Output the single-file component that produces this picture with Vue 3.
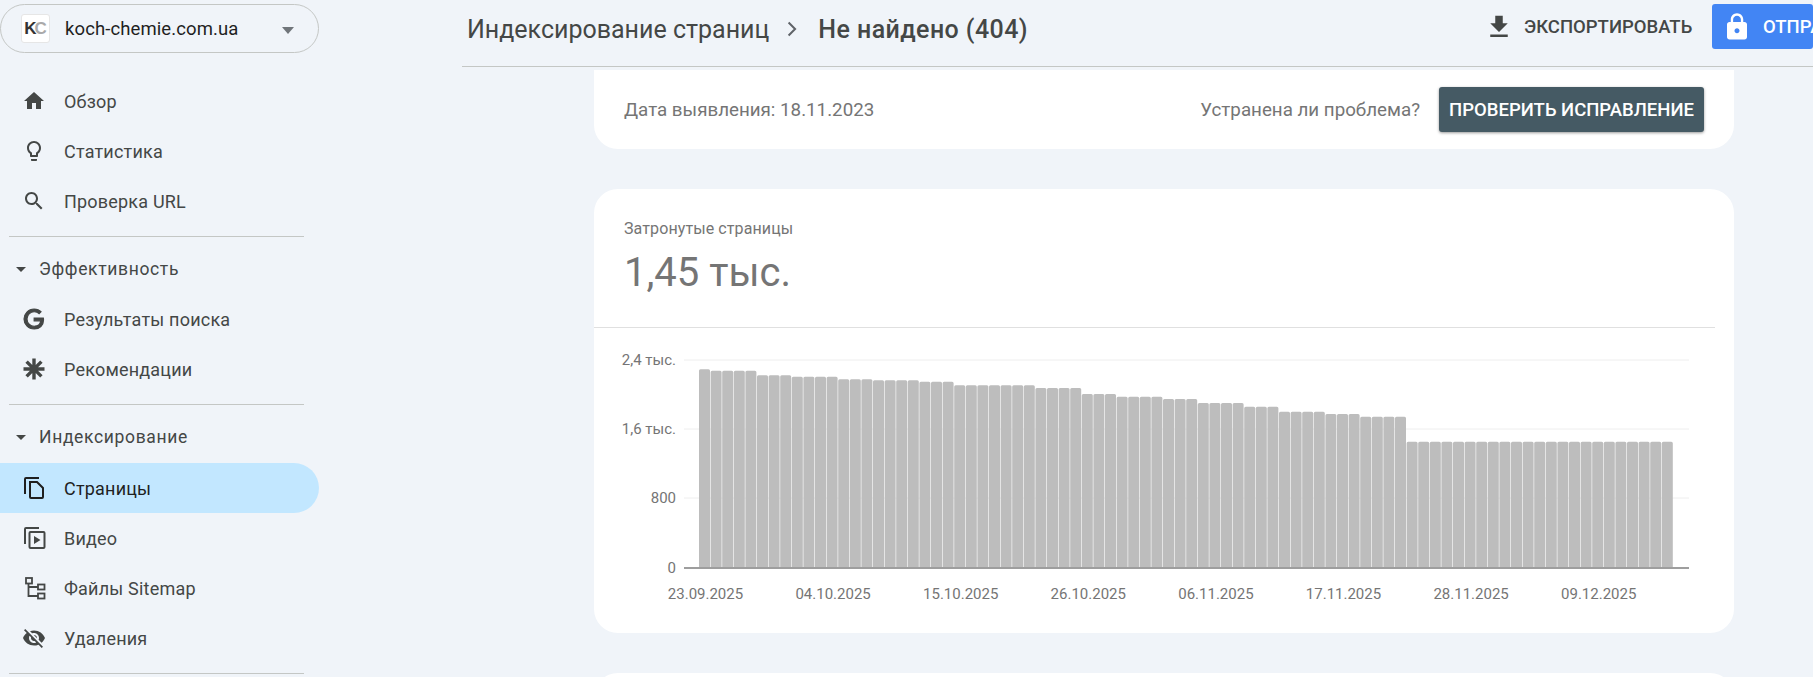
<script setup>
const runs = [
  [1, 369.3], [4, 370.7], [3, 375.3], [4, 376.7], [3, 379.3], [4, 380.3], [3, 381.7],
  [7, 385.2], [4, 388], [3, 394], [4, 396.7], [3, 399], [4, 403], [3, 406.7],
  [4, 411.7], [3, 414], [4, 416.7], [23, 441.7]
]
const OX = 594
const OY = 328
const BASE = 568 - OY
const PITCH = 11.6
const tops = runs.flatMap(([n, t]) => Array(n).fill(t - OY))
const bars = tops.map((t, i) => {
  const x = 699 - OX + i * PITCH
  const w = 11
  const r = 1.5
  return `M${x} ${BASE}V${t + r}Q${x} ${t} ${x + r} ${t}H${x + w - r}Q${x + w} ${t} ${x + w} ${t + r}V${BASE}Z`
}).join('')
const grid = [
  { y: 360 - OY, label: '2,4 тыс.' },
  { y: 429 - OY, label: '1,6 тыс.' },
  { y: 498 - OY, label: '800' },
  { y: 567.5 - OY, label: '0' }
]
const dates = ['23.09.2025', '04.10.2025', '15.10.2025', '26.10.2025', '06.11.2025', '17.11.2025', '28.11.2025', '09.12.2025']
  .map((d, i) => ({ d, x: 705.5 - OX + i * 11 * PITCH }))
</script>

<template>
  <div class="page">
    <aside class="sidebar">
      <div class="property">
        <span class="logo"><b class="k">K</b><b class="c">C</b></span>
        <span class="domain">koch-chemie.com.ua</span>
        <span class="drop"></span>
      </div>
      <nav class="group first">
        <a class="item">
          <svg viewBox="0 0 24 24" class="ico"><path d="M10 20v-6h4v6h5v-8h3L12 3 2 12h3v8z" /></svg>
          <span>Обзор</span>
        </a>
        <a class="item">
          <svg viewBox="0 0 24 24" class="ico"><path d="M9 21c0 .55.45 1 1 1h4c.55 0 1-.45 1-1v-1H9v1zm3-19C8.14 2 5 5.14 5 9c0 2.38 1.19 4.47 3 5.74V17c0 .55.45 1 1 1h6c.55 0 1-.45 1-1v-2.26c1.81-1.27 3-3.36 3-5.74 0-3.86-3.14-7-7-7zm2.85 11.1l-.85.6V16h-4v-2.3l-.85-.6C7.8 12.16 7 10.63 7 9c0-2.76 2.24-5 5-5s5 2.24 5 5c0 1.63-.8 3.16-2.15 4.1z" /></svg>
          <span>Статистика</span>
        </a>
        <a class="item">
          <svg viewBox="0 0 24 24" class="ico"><path d="M15.5 14h-.79l-.28-.27C15.41 12.59 16 11.11 16 9.5 16 5.91 13.09 3 9.5 3S3 5.91 3 9.5 5.91 16 9.5 16c1.61 0 3.09-.59 4.23-1.57l.27.28v.79l5 4.99L20.49 19l-4.99-5zm-6 0C7.01 14 5 11.99 5 9.5S7.01 5 9.5 5 14 7.01 14 9.5 11.99 14 9.5 14z" /></svg>
          <span>Проверка URL</span>
        </a>
      </nav>
      <hr class="rule" />
      <div class="heading"><i class="caret"></i><span>Эффективность</span></div>
      <nav class="group second">
        <a class="item">
          <svg viewBox="0 0 24 24" class="ico bold"><path d="M21.35 11.1h-9.17v2.73h6.51c-.33 3.81-3.5 5.44-6.5 5.44C8.36 19.27 5 16.25 5 12c0-4.1 3.2-7.27 7.2-7.27 3.09 0 4.9 1.97 4.9 1.97L19 4.72S16.56 2 12.1 2C6.42 2 2.03 6.8 2.03 12c0 5.05 4.13 10 10.22 10 5.35 0 9.25-3.67 9.25-9.09 0-1.15-.15-1.81-.15-1.81z" /></svg>
          <span>Результаты поиска</span>
        </a>
        <a class="item">
          <svg viewBox="0 0 24 24" class="ico stroke3"><path d="M12 1.5v21M1.5 12h21M4.6 4.6l14.8 14.8M19.4 4.6L4.6 19.4" /></svg>
          <span>Рекомендации</span>
        </a>
      </nav>
      <hr class="rule" />
      <div class="heading"><i class="caret"></i><span>Индексирование</span></div>
      <nav class="group third">
        <a class="item active">
          <svg viewBox="0 0 24 24" class="ico line"><path d="M17 2H4a1 1 0 0 0-1 1v15" /><path d="M8 6h7l6 6v9a1 1 0 0 1-1 1H9a1 1 0 0 1-1-1z" /></svg>
          <span>Страницы</span>
        </a>
        <a class="item">
          <svg viewBox="0 0 24 24" class="ico line"><path d="M17 2H4a1 1 0 0 0-1 1v15" /><rect x="7.5" y="6" width="15" height="16" rx="1" /><path class="tri" d="M12 10v8l6.5-4z" /></svg>
          <span>Видео</span>
        </a>
        <a class="item">
          <svg viewBox="0 0 24 24" class="ico line thin"><rect x="4" y="2" width="6" height="5.5" /><rect x="16" y="8.5" width="6.5" height="5" /><rect x="16" y="17.5" width="6.5" height="5" /><path d="M6.5 7.5V20H16M6.5 11H16" /></svg>
          <span>Файлы Sitemap</span>
        </a>
        <a class="item">
          <svg viewBox="0 0 24 24" class="ico"><path d="M12 7c2.76 0 5 2.24 5 5 0 .65-.13 1.26-.36 1.83l2.92 2.92c1.51-1.26 2.7-2.89 3.43-4.75-1.73-4.39-6-7.5-11-7.5-1.4 0-2.74.25-3.98.7l2.16 2.16C10.74 7.13 11.35 7 12 7zM2 4.27l2.28 2.28.46.46C3.08 8.3 1.78 10.02 1 12c1.73 4.39 6 7.5 11 7.5 1.55 0 3.03-.3 4.38-.84l.42.42L19.73 22 21 20.73 3.27 3 2 4.27zM7.53 9.8l1.55 1.55c-.05.21-.08.43-.08.65 0 1.66 1.34 3 3 3 .22 0 .44-.03.65-.08l1.55 1.55c-.67.33-1.41.53-2.2.53-2.76 0-5-2.24-5-5 0-.79.2-1.53.53-2.2zm4.31-.78l3.15 3.15.02-.16c0-1.66-1.34-3-3-3l-.17.01z" /></svg>
          <span>Удаления</span>
        </a>
      </nav>
      <hr class="rule" />
    </aside>

    <main class="main">
      <header class="topbar">
        <div class="crumbs">
          <span class="crumb">Индексирование страниц</span>
          <svg viewBox="0 0 24 24" class="chev"><path d="M8.6 5.5l6.5 6.5-6.5 6.5" /></svg>
          <span class="crumb current">Не найдено (404)</span>
        </div>
        <div class="actions">
          <button class="export">
            <svg viewBox="0 0 24 24" class="btn-ico"><path d="M19 9h-4V3H9v6H5l7 7 7-7zM5 18v2h14v-2H5z" /></svg>
            ЭКСПОРТИРОВАТЬ
          </button>
          <button class="share">
            <svg viewBox="0 0 24 24" class="btn-ico"><path d="M18 8h-1V6c0-2.76-2.24-5-5-5S7 3.24 7 6v2H6c-1.1 0-2 .9-2 2v10c0 1.1.9 2 2 2h12c1.1 0 2-.9 2-2V10c0-1.1-.9-2-2-2zm-6 9c-1.1 0-2-.9-2-2s.9-2 2-2 2 .9 2 2-.9 2-2 2zm3.1-9H8.9V6c0-1.71 1.39-3.1 3.1-3.1 1.71 0 3.1 1.39 3.1 3.1v2z" /></svg>
            ОТПРА
          </button>
        </div>
      </header>

      <div class="content">
        <section class="card status">
          <span class="detected">Дата выявления: 18.11.2023</span>
          <div class="fix">
            <span class="question">Устранена ли проблема?</span>
            <button class="validate">ПРОВЕРИТЬ ИСПРАВЛЕНИЕ</button>
          </div>
        </section>

        <section class="card stats">
          <div class="stats-head">
            <div class="stat-label">Затронутые страницы</div>
            <div class="stat-value">1,45 тыс.</div>
          </div>
          <hr class="stats-rule" />
          <svg class="chart" width="1140" height="305" viewBox="0 0 1140 305">
            <g v-for="g in grid" :key="g.label">
              <line v-if="g.label !== '0'" x1="90" x2="1095" :y1="g.y" :y2="g.y" class="gridline" />
              <text x="82" :y="g.y + 5" text-anchor="end" class="tick">{{ g.label }}</text>
            </g>
            <path :d="bars" class="bars" />
            <line x1="90" x2="1095" :y1="BASE" :y2="BASE" class="axis" />
            <text v-for="t in dates" :key="t.d" :x="t.x" y="271" text-anchor="middle" class="tick">{{ t.d }}</text>
          </svg>
        </section>

        <section class="card next"></section>
      </div>
    </main>
  </div>
</template>

<style>
html, body { margin: 0; background: #f0f4f9; }
</style>

<style scoped>
.page {
  width: 1813px;
  height: 677px;
  overflow: hidden;
  display: flex;
  background: #f0f4f9;
  font-family: Roboto, "Noto Sans", sans-serif;
  color: #444746;
}
.sidebar { width: 319px; flex: none; padding-top: 4px; box-sizing: border-box; }
.property {
  height: 49px;
  box-sizing: border-box;
  border: 1px solid #c4c7c5;
  border-radius: 25px;
  display: flex;
  align-items: center;
  padding-left: 20px;
  position: relative;
}
.logo {
  width: 29px;
  height: 29px;
  box-sizing: border-box;
  background: #fff;
  border: 1px solid #e6e6e6;
  border-radius: 3px;
  display: flex;
  align-items: center;
  justify-content: center;
  font: 700 17px/1 "Liberation Sans", sans-serif;
}
.k { color: #333; }
.c { color: #aaa; margin-left: -2px; }
.domain { margin-left: 15px; font-size: 18.5px; letter-spacing: .1px; color: #1f1f1f; }
.drop {
  position: absolute;
  left: 281px;
  top: 22px;
  border: 6px solid transparent;
  border-top: 7px solid #70757a;
  border-bottom: 0;
}
.group { display: flex; flex-direction: column; }
.group.first { margin-top: 23px; }
.group.second { margin-top: 2px; margin-bottom: 1px; }
.group.third { margin-top: 3px; }
.item {
  height: 50px;
  display: flex;
  align-items: center;
  padding-left: 22px;
  border-radius: 0 25px 25px 0;
  font-size: 18px;
  letter-spacing: .2px;
}
.item.active { background: #c2e7ff; color: #1f1f1f; }
.ico { width: 24px; height: 24px; margin-right: 18px; flex: none; fill: #444746; }
.item.active .ico { fill: none; stroke: #1f1f1f; }
.ico.bold { stroke: #444746; stroke-width: 1.2; }
.stroke3 { fill: none; stroke: #444746; stroke-width: 3.4; }
.line { fill: none; stroke: #444746; stroke-width: 2; }
.line .tri { fill: #444746; stroke: none; }
.line.thin { stroke-width: 1.8; }
.rule { margin: 10px 0 0 9px; width: 295px; border: 0; border-top: 1px solid #c4c7c5; height: 0; }
.heading {
  height: 46px;
  margin-top: 9px;
  display: flex;
  align-items: center;
  padding-left: 16px;
  font-size: 17.5px;
  letter-spacing: .65px;
}
.caret {
  width: 0;
  height: 0;
  border: 5.5px solid transparent;
  border-top: 5.5px solid #444746;
  border-bottom: 0;
  margin-right: 13px;
}

.main { flex: none; width: 1494px; min-width: 0; }
.topbar {
  height: 66px;
  margin-left: 143px;
  border-bottom: 1px solid #c4c7c5;
  display: flex;
  align-items: flex-start;
  padding-left: 5px;
}
.crumbs { flex: 1; display: flex; align-items: center; height: 58px; min-width: 0; }
.crumb { font-size: 25px; color: #444746; }
.crumb.current { font-weight: 500; letter-spacing: .42px; }
.chev { width: 24px; height: 24px; margin: 0 14px 0 11px; fill: none; stroke: #5f6368; stroke-width: 2; }
.actions { display: flex; align-items: center; height: 45px; margin-top: 4px; width: 329px; flex: none; overflow: hidden; }
button { font-family: inherit; border: 0; cursor: pointer; padding: 0; }
.export {
  background: none;
  display: flex;
  align-items: center;
  gap: 10px;
  font-size: 18.5px;
  font-weight: 500;
  color: #444746;
  width: 228px;
  flex: none;
  white-space: nowrap;
}
.btn-ico { width: 30px; height: 30px; flex: none; fill: currentColor; }
.share {
  height: 45px;
  background: #4285f4;
  color: #fff;
  border-radius: 3px;
  display: flex;
  align-items: center;
  gap: 11px;
  padding: 0 0 0 10px;
  font-size: 18.5px;
  font-weight: 500;
  width: 101px;
  flex: none;
  white-space: nowrap;
}
.content { padding: 3px 0 0 275px; display: flex; flex-direction: column; gap: 40px; }
.card { width: 1140px; background: #fff; box-sizing: border-box; }
.status {
  height: 79px;
  border-radius: 0 0 24px 24px;
  display: flex;
  align-items: center;
  justify-content: space-between;
  padding: 0 30px;
  color: #757575;
  font-size: 18.75px;
}
.fix { display: flex; align-items: center; gap: 19px; }
.validate {
  width: 265px;
  height: 45px;
  background: #455a64;
  color: #fff;
  border-radius: 3px;
  font-size: 18.5px;
  font-weight: 500;
  box-shadow: 0 1px 3px rgba(0,0,0,.4);
}
.stats { height: 444px; border-radius: 24px; }
.stats-head { height: 138px; box-sizing: border-box; padding: 30px 0 0 30px; color: #757575; }
.stat-label { font-size: 16px; letter-spacing: .1px; line-height: 20px; }
.stat-value { font-size: 40px; line-height: 47px; margin-top: 10px; }
.stats-rule { margin: 0 19px 0 0; border: 0; border-top: 1px solid #e0e0e0; height: 0; }
.chart { display: block; }
.gridline { stroke: #eeeeee; stroke-width: 1; }
.axis { stroke: #9e9e9e; stroke-width: 2; }
.bars { fill: #bdbdbd; }
.tick { font-size: 15px; fill: #757575; font-family: Roboto, sans-serif; }
.next { height: 60px; border-radius: 24px 24px 0 0; }
</style>
